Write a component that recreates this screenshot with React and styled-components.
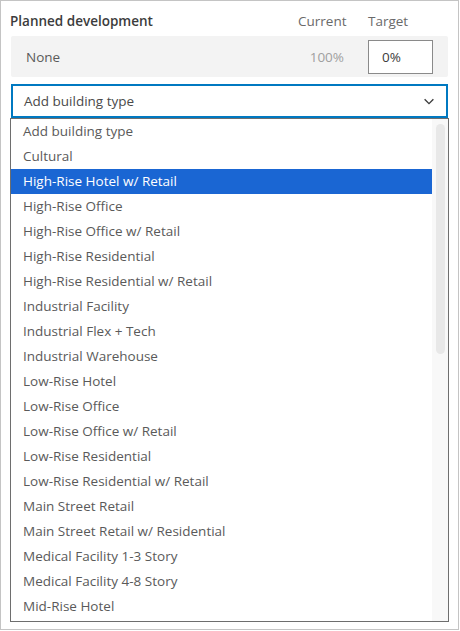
import React from 'react';
import styled, { createGlobalStyle } from 'styled-components';

const GlobalStyle = createGlobalStyle`
    html, body {
        margin: 0;
        padding: 0;
        background: #ffffff;
    }
    body {
        font-family: "Open Sans", "Noto Sans", sans-serif;
    }
`;

const Frame = styled.div`
    box-sizing: border-box;
    width: 459px;
    height: 630px;
    border: 1px solid #c4c4c4;
    padding: 0 10px 0 9px;
    display: flex;
    flex-direction: column;
    overflow: hidden;
`;

const HeaderRow = styled.div`
    display: flex;
    align-items: center;
    height: 35px;
    padding-top: 4px;
    box-sizing: border-box;
`;

const Title = styled.div`
    flex: 1;
    font-size: 13.5px;
    font-weight: 600;
    color: #3c3c3c;
`;

const ColumnLabel = styled.div`
    font-size: 13.5px;
    color: #6a6a6a;
    width: ${(p) => p.width}px;
`;

const DevRow = styled.div`
    display: flex;
    align-items: center;
    height: 41px;
    margin-left: 1px;
    background: #f3f3f3;
    border-radius: 2px;
    padding: 0 15px 0 15px;
`;

const DevName = styled.div`
    flex: 1;
    font-size: 13.5px;
    color: #5a5a5a;
`;

const DevCurrent = styled.div`
    font-size: 13.5px;
    color: #a0a0a0;
    margin-right: 24px;
`;

const TargetInput = styled.div`
    box-sizing: border-box;
    width: 65px;
    height: 34px;
    background: #ffffff;
    border: 1px solid #8a8a8a;
    padding-left: 13px;
    display: flex;
    align-items: center;
    font-size: 13.5px;
    color: #3c3c3c;
`;

const SelectBox = styled.div`
    box-sizing: border-box;
    margin-top: 7px;
    margin-left: 1px;
    height: 34px;
    border: 2px solid #0079c1;
    display: flex;
    align-items: center;
    padding: 0 10px 0 11px;
    font-size: 13.5px;
    color: #4a4a4a;
`;

const SelectText = styled.div`
    flex: 1;
`;

const ListBox = styled.div`
    box-sizing: border-box;
    width: 439px;
    height: 504px;
    border: 1px solid #6e6e6e;
    display: flex;
    overflow: hidden;
`;

const Options = styled.div`
    flex: 1;
`;

const Option = styled.div`
    height: 25px;
    line-height: 25px;
    padding-left: 12px;
    font-size: 13.5px;
    white-space: nowrap;
    background: ${(p) => (p.selected ? '#1a66d3' : 'transparent')};
    color: ${(p) => (p.selected ? '#ffffff' : '#5a5a5a')};
`;

const ScrollTrack = styled.div`
    width: 16px;
    background: #f8f8f8;
    padding: 5px 3px 0 4px;
    box-sizing: border-box;
`;

const ScrollThumb = styled.div`
    height: 230px;
    border-radius: 5px;
    background: #e8e8e8;
`;

const items = [
    'Add building type',
    'Cultural',
    'High-Rise Hotel w/ Retail',
    'High-Rise Office',
    'High-Rise Office w/ Retail',
    'High-Rise Residential',
    'High-Rise Residential w/ Retail',
    'Industrial Facility',
    'Industrial Flex + Tech',
    'Industrial Warehouse',
    'Low-Rise Hotel',
    'Low-Rise Office',
    'Low-Rise Office w/ Retail',
    'Low-Rise Residential',
    'Low-Rise Residential w/ Retail',
    'Main Street Retail',
    'Main Street Retail w/ Residential',
    'Medical Facility 1-3 Story',
    'Medical Facility 4-8 Story',
    'Mid-Rise Hotel',
];

const Chevron = () => (
    <svg width="14" height="14" viewBox="0 0 16 16">
        <path d="M3 6l5 5 5-5" fill="none" stroke="#3c3c3c" strokeWidth="1.6" />
    </svg>
);

const App = () => {
    return (
        <>
            <GlobalStyle />
            <Frame>
                <HeaderRow>
                    <Title>Planned development</Title>
                    <ColumnLabel width={70}>Current</ColumnLabel>
                    <ColumnLabel width={80}>Target</ColumnLabel>
                </HeaderRow>
                <DevRow>
                    <DevName>None</DevName>
                    <DevCurrent>100%</DevCurrent>
                    <TargetInput>0%</TargetInput>
                </DevRow>
                <SelectBox>
                    <SelectText>Add building type</SelectText>
                    <Chevron />
                </SelectBox>
                <ListBox>
                    <Options>
                        {items.map((item, i) => (
                            <Option key={item} selected={i === 2}>
                                {item}
                            </Option>
                        ))}
                    </Options>
                    <ScrollTrack>
                        <ScrollThumb />
                    </ScrollTrack>
                </ListBox>
            </Frame>
        </>
    );
};

export default App;
